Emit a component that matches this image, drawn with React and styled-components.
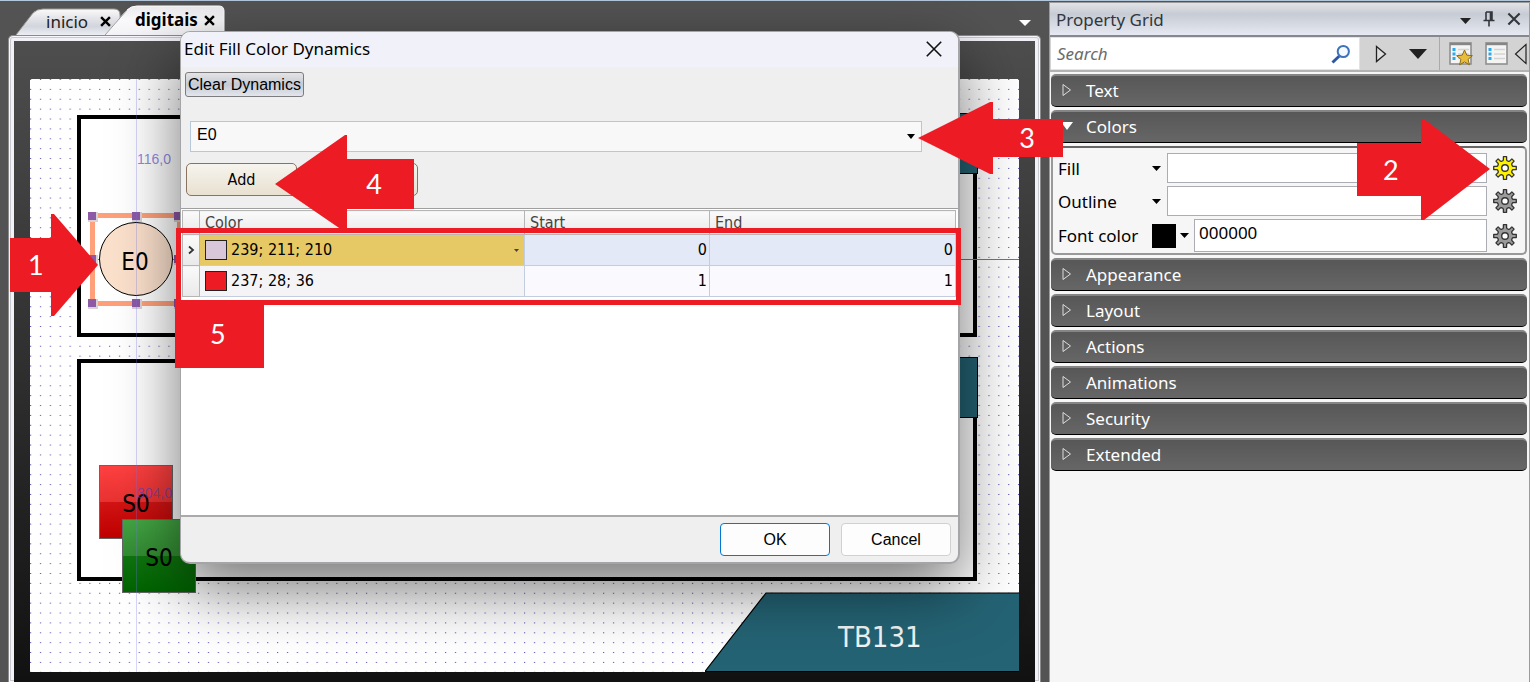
import React from "react";
import styled, { createGlobalStyle, css } from "styled-components";

const UI = `"Noto Sans", "Open Sans", sans-serif`;
const CLASSIC = `"DejaVu Sans Condensed", "DejaVu Sans", sans-serif`;
const ARIAL = `"Liberation Sans", Arial, sans-serif`;
const RED = "#ed1c24";

const GlobalStyle = createGlobalStyle`
  *, *::before, *::after { box-sizing: border-box; }
  html, body { margin: 0; padding: 0; }
  body { background: #535353; font-family: ${UI}; font-size: 17px; color: #000; overflow: hidden; }
  button, input, select { font: inherit; color: inherit; margin: 0; padding: 0; }
  button { background: none; border: 0; }
  svg { display: block; flex: none; }
`;

/* ---------- Shell ---------- */

const Workspace = styled.div`
  position: relative;
  display: flex;
  min-height: 100vh;
  border-top: 1px solid #b4c6da;
  background: #535353;
`;

const Editor = styled.main`
  flex: 1;
  min-width: 0;
  display: flex;
  flex-direction: column;
  padding: 0 8px;
`;

/* ---------- Document tabs ---------- */

const TabStrip = styled.div`
  display: flex;
  align-items: flex-end;
  height: 34px;
  padding: 0 10px 0 8px;
`;

const Tab = styled.div`
  position: relative;
  isolation: isolate;
  display: flex;
  align-items: center;
  gap: ${(p) => (p.$active ? 6 : 12)}px;
  width: ${(p) => (p.$active ? 120 : 105)}px;
  height: ${(p) => (p.$active ? 30 : 27)}px;
  padding-left: 30px;
  margin-left: ${(p) => (p.$active ? -16 : 0)}px;
  font-weight: ${(p) => (p.$active ? 700 : 400)};
`;

const TabShape = styled.svg`
  position: absolute;
  inset: 0;
  z-index: -1;
`;

const TabName = styled.button`
  line-height: 24px;
  color: ${(p) => (p.$active ? "#000" : "#222")};
`;

const Spacer = styled.div`
  flex: 1;
`;

const StripMenu = styled.button`
  align-self: center;
  padding-top: 10px;
`;

/* ---------- Drawing canvas ---------- */

const Frame = styled.div`
  flex: 1;
  display: flex;
  border: 1px solid #8b8b8b;
  border-bottom: 0;
  border-radius: 5px 5px 0 0;
  padding: 5px 5px 0;
  background: #f1f1f7;
  box-shadow: inset 0 0 0 1px #f8f8fc, inset 0 0 0 2px #c9c9d0;
`;

const Backdrop = styled.div`
  flex: 1;
  display: flex;
  padding: 38px 16px 10px;
  background: linear-gradient(#4e4e4e, #111);
`;

const Canvas = styled.div`
  position: relative;
  flex: 1;
  overflow: hidden;
  background: #fff;
  font-family: ${CLASSIC};
`;

const GridLayer = styled.svg`
  position: absolute;
  inset: 0;
  width: 100%;
  height: 100%;
`;

const Group = styled.div`
  position: absolute;
  left: 47px;
  right: 42px;
  top: ${(p) => p.$top}px;
  height: 222px;
  border: 4px solid #000;
  background: #fff;
`;

const GroupTag = styled.div`
  position: absolute;
  right: -5px;
  top: -6px;
  width: 220px;
  height: 61px;
  border: 1px solid #000;
  background: #246374;
`;

const Shape = styled.div`
  position: absolute;
  left: ${(p) => p.$x}px;
  top: ${(p) => p.$y}px;
  width: 74px;
  height: 74px;
  display: flex;
  align-items: center;
  justify-content: center;
  font-size: 24px;
`;

const Lamp = styled(Shape)`
  padding: 6px 2px 0 0;
  border: 1px solid #000;
  border-radius: 50%;
  background: #fbe0cc;
`;

const Coil = styled(Shape)`
  padding-top: 4px;
  border: 1px solid #666;
  background: ${(p) =>
    p.$green
      ? "linear-gradient(#43a643, #338c33 50%, #0f750f 50%, #006400)"
      : "linear-gradient(#ff4040, #e83232 50%, #d21414 50%, #c00000)"};
`;

const Selection = styled.div`
  position: absolute;
  left: 60px;
  top: 134px;
  width: 92px;
  height: 93px;
  border: 5px solid #ffa07a;
`;

const Handle = styled.i`
  position: absolute;
  left: ${(p) => p.$x}px;
  top: ${(p) => p.$y}px;
  width: 10px;
  height: 10px;
  border: 2px solid #d9d2d6;
  border-top: 0;
  border-left: 0;
  background: #8d5aa6;
`;

const GuideX = styled.div`
  position: absolute;
  left: 106px;
  top: 0;
  bottom: 0;
  width: 1px;
  background: rgba(120, 120, 240, 0.3);
`;

const GuideY = styled.div`
  position: absolute;
  top: 180px;
  left: 47px;
  right: 0;
  height: 1px;
  background: #6a68dc;
`;

const Distance = styled.span`
  position: absolute;
  left: 107px;
  top: ${(p) => p.$y}px;
  font: 14px/16px ${ARIAL};
  color: rgba(80, 70, 210, 0.65);
`;

const Plate = styled.div`
  position: absolute;
  right: 0;
  bottom: 0;
  width: 314px;
  height: 80px;
  display: flex;
  align-items: center;
  padding: 10px 0 0 133px;
  font-size: 29px;
  color: #f2f5f6;
`;

const PlateShape = styled.svg`
  position: absolute;
  inset: 0;
`;

const PlateText = styled.span`
  position: relative;
`;

/* ---------- Property panel ---------- */

const Panel = styled.aside`
  flex: none;
  width: 481px;
  display: flex;
  flex-direction: column;
  margin-top: 1px;
  border: 1px solid #9b9b9b;
  border-bottom: 0;
  background: #f6f6f6;
`;

const PanelHeader = styled.header`
  display: flex;
  align-items: center;
  gap: 12px;
  height: 34px;
  padding: 0 8px 0 6px;
  border-bottom: 2px solid #85888e;
  background: linear-gradient(#e2e3e6, #c6cbd4 35%, #e6e9f2);
  color: #33363c;
`;

const PanelTitle = styled.h2`
  flex: 1;
  margin: 0;
  font-size: 17px;
  font-weight: 400;
`;

const PanelMenu = styled.button`
  padding-top: 4px;
`;

const Toolbar = styled.div`
  display: flex;
  align-items: stretch;
  height: 33px;
  background: #d3d3d3;
`;

const SearchBox = styled.label`
  display: flex;
  align-items: center;
  flex: 1;
  min-width: 0;
  padding: 0 8px 0 6px;
  margin-left: 1px;
  background: #fff;
  border: 1px solid #dfe3ec;
  border-left: 0;
`;

const SearchInput = styled.input`
  flex: 1;
  min-width: 0;
  border: 0;
  outline: 0;
  background: none;
  font-style: italic;
  &::placeholder { color: #6b6b6b; opacity: 1; }
`;

const ToolGroup = styled.div`
  display: flex;
  align-items: center;
  justify-content: ${(p) => (p.$divided ? "flex-start" : "space-between")};
  gap: ${(p) => (p.$divided ? 12 : 0)}px;
  width: ${(p) => p.$width}px;
  padding: ${(p) => p.$padding};
  border-left: ${(p) => (p.$divided ? "1px solid #aaa" : "0")};
`;

const PreviousButton = styled.button`
  margin-left: -7px;
`;

const Sections = styled.div`
  display: flex;
  flex-direction: column;
  gap: 3px;
  padding: 2px 2px 3px 1px;
  border-top: 2px solid #b3b3b3;
`;

const SectionButton = styled.button`
  display: flex;
  align-items: center;
  gap: 13px;
  height: 33px;
  padding: 0 10px 2px;
  border-top: 2px solid #858585;
  border-bottom: 1px solid #000;
  border-radius: 5px;
  background: linear-gradient(#575757, #666);
  color: #fff;
  text-align: left;
`;

const SectionBody = styled.div`
  display: flex;
  flex-direction: column;
  gap: 3px;
  height: 109px;
  padding: 5px 8px 0 5px;
  border: 2px solid #999;
  border-top-color: #666;
  border-radius: 5px;
`;

const Row = styled.div`
  display: flex;
  align-items: center;
  height: ${(p) => (p.$tall ? 33 : 30)}px;
`;

const RowLabel = styled.label`
  width: 94px;
  white-space: nowrap;
`;

const ColorButton = styled.button`
  display: flex;
  align-items: center;
  gap: 4px;
  width: ${(p) => (p.$wide ? 42 : 15)}px;
`;

const Swatch = styled.span`
  flex: none;
  width: ${(p) => p.$size}px;
  height: ${(p) => p.$size}px;
  border: 1px solid #000;
  background: ${(p) => p.$color};
`;

const ValueInput = styled.input`
  flex: 1;
  min-width: 0;
  align-self: stretch;
  padding: 0 4px 7px;
  border: 1px solid #abadb3;
  background: #fff;
  outline: 0;
`;

const GearButton = styled.button`
  margin-left: 6px;
`;

/* ---------- Dialog ---------- */

const Dialog = styled.section`
  position: absolute;
  left: 180px;
  top: 30px;
  width: 780px;
  border: 1px solid #a5a5a8;
  border-right-width: 2px;
  border-bottom-width: 2px;
  border-radius: 10px;
  overflow: hidden;
  background: #efefef;
  box-shadow: 0 24px 64px rgba(0, 0, 0, 0.55);
`;

const DialogTitle = styled.header`
  display: flex;
  align-items: center;
  justify-content: space-between;
  height: 35px;
  padding: 0 15px 2px 3px;
  background: #f1f2f9;
  font-size: 17px;
`;

const DialogBody = styled.div`
  display: flex;
  flex-direction: column;
  align-items: flex-start;
  padding: 5px 0 0 4px;
`;

const ClearButton = styled.button`
  height: 25px;
  padding: 0 2px;
  border: 1px solid #7c7c80;
  border-radius: 3px;
  background: linear-gradient(#e4e4e6, #cfd2d9 35%, #c6cad3 50%, #e2e5ec);
  font: 16px/20px ${ARIAL};
`;

const TagPicker = styled.div`
  position: relative;
  align-self: stretch;
  margin: 24px 36px 0 5px;
`;

const TagSelect = styled.select`
  appearance: none;
  width: 100%;
  height: 31px;
  padding: 0 6px 4px;
  border: 1px solid #b5c7d9;
  border-radius: 0;
  background: #f8f8f8;
  font: 16px/20px ${ARIAL};
  outline: 0;
`;

const PickerCaret = styled.svg`
  position: absolute;
  right: ${(p) => p.$right}px;
  top: ${(p) => p.$top}px;
  pointer-events: none;
`;

const Actions = styled.div`
  display: flex;
  gap: 10px;
  margin: 11px 0 12px 1px;
`;

const ActionButton = styled.button`
  width: 111px;
  height: 33px;
  border: 1px solid #8a7360;
  border-radius: 5px;
  background: linear-gradient(#f6f4ee, #e8e1d0);
  font: 16px/20px ${CLASSIC};
`;

const GridPanel = styled.div`
  height: 309px;
  border-top: 1px solid #9f9f9f;
  border-bottom: 2px solid #aaa;
  padding: 1px 2px 0 1px;
  background: #fff;
`;

const Grid = styled.table`
  width: 100%;
  table-layout: fixed;
  border-collapse: collapse;
  font: 16px/20px ${CLASSIC};
`;

const HeadCell = styled.th`
  width: ${(p) => (p.$width ? `${p.$width}px` : "auto")};
  height: 24px;
  padding: 0 5px;
  border: 1px solid #b5b5b5;
  background: linear-gradient(#fafafa, #e9e9e9);
  color: #444;
  font-weight: 400;
  text-align: left;
`;

const Cell = styled.td`
  height: 31px;
  padding: 0 2px 0 5px;
  border: 1px solid #c3cde0;
  background: ${(p) => (p.$current ? "#e3e9f7" : "#fafafe")};
  text-align: right;
  ${(p) =>
    p.$marker &&
    css`
      padding: 0 4px;
      border-color: #b5b5b5;
      background: linear-gradient(#fafafa, #e9e9e9);
    `}
  ${(p) =>
    p.$color &&
    css`
      background: ${p.$current ? "#e6c964" : "#f4f4f7"};
      text-align: left;
    `}
`;

const ColorValue = styled.div`
  position: relative;
  display: flex;
  align-items: center;
  gap: 4px;
`;

const SwatchBox = styled.span`
  flex: none;
  width: 22px;
  height: 20px;
  border: 1px solid #222;
  background: ${(p) => p.$color};
`;

const ColorSelect = styled.select`
  appearance: none;
  flex: 1;
  border: 0;
  background: none;
  outline: 0;
`;

const DialogFooter = styled.footer`
  display: flex;
  justify-content: flex-end;
  gap: 11px;
  padding: 6px 7px;
`;

const FooterButton = styled.button`
  width: 110px;
  height: 33px;
  border: 1px solid ${(p) => (p.$primary ? "#0078d4" : "#d0d0d0")};
  border-radius: 4px;
  background: #fdfdfd;
  font: 16px/20px ${ARIAL};
`;

/* ---------- Step markers ---------- */

const Marker = styled.div`
  position: absolute;
  top: ${(p) => p.$top}px;
  ${(p) => (p.$right !== undefined ? `right: ${p.$right}px;` : `left: ${p.$left}px;`)}
  width: ${(p) => p.$w}px;
  height: ${(p) => p.$h}px;
  display: flex;
  align-items: center;
  justify-content: ${(p) => (p.$dir === "left" ? "flex-end" : "flex-start")};
  padding: 0 ${(p) => p.$inset}px;
  background: ${(p) => (p.$dir ? "none" : RED)};
  color: #fff;
  font: 27px/32px Lato, sans-serif;
  pointer-events: none;
`;

const MarkerShape = styled.svg`
  position: absolute;
  inset: 0;
`;

const MarkerText = styled.span`
  position: relative;
`;

const Highlight = styled.div`
  position: absolute;
  left: 176px;
  top: 227px;
  width: 785px;
  height: 77px;
  border: 5px solid ${RED};
  pointer-events: none;
`;

/* ---------- Icons ---------- */

const Caret = ({ w = 9, h = 5, color = "#000" }) => (
  <svg width={w} height={h} viewBox={`0 0 ${w} ${h}`} aria-hidden="true">
    <path d={`M0 0H${w}L${w / 2} ${h}Z`} fill={color} />
  </svg>
);

const Cross = ({ size, color, weight }) => (
  <svg width={size} height={size} viewBox="0 0 10 10" aria-hidden="true">
    <path d="M1 1L9 9M9 1L1 9" stroke={color} strokeWidth={weight} fill="none" />
  </svg>
);

const gearPath = (() => {
  const points = [];
  for (let i = 0; i < 8; i += 1) {
    const a = (i * Math.PI) / 4;
    [
      [7.6, -0.3],
      [8.2, -0.2],
      [11.4, -0.14],
      [11.4, 0.14],
      [8.2, 0.2],
      [7.6, 0.3],
    ].forEach(([r, d]) => {
      points.push(`${(12 + r * Math.sin(a + d)).toFixed(2)} ${(12 - r * Math.cos(a + d)).toFixed(2)}`);
    });
  }
  return `M${points.join("L")}Z`;
})();

const Gear = ({ color }) => (
  <svg width="24" height="24" viewBox="0 0 24 24" aria-hidden="true">
    <path d={gearPath} fill={color} stroke="#333" strokeWidth="1.3" strokeLinejoin="round" />
    <circle cx="12" cy="12" r="3.3" fill="#fff" stroke="#333" strokeWidth="1.4" />
  </svg>
);

const ListIcon = ({ star }) => (
  <svg width="24" height="24" viewBox="0 0 24 24" aria-hidden="true">
    <rect x="1" y="1" width="21" height="21" fill="#f4f4f2" stroke="#8f8f8f" strokeWidth="1.6" />
    <path d="M1 2H22" stroke="#858585" strokeWidth="2.4" />
    <path d="M3.5 7.5h3M3.5 12h3M3.5 16.5h3" stroke="#2aa9ec" strokeWidth="3" />
    <path d="M9 7.5h11M9 12h11M9 16.5h11" stroke="#d4d4d4" strokeWidth="1.6" />
    {star && (
      <path
        d="M15.5 8L17.8 13.2L23.4 13.7L19.1 17.3L20.4 22.8L15.5 19.9L10.6 22.8L11.9 17.3L7.6 13.7L13.2 13.2Z"
        fill="#e9bd3a"
        stroke="#8a6a22"
        strokeWidth="1"
      />
    )}
  </svg>
);

const Magnifier = () => (
  <svg width="20" height="20" viewBox="0 0 20 20" aria-hidden="true">
    <path d="M8.3 12L1.5 18.5" stroke="#2d57a5" strokeWidth="3" />
    <circle cx="12.3" cy="7.5" r="5.6" fill="#f4faff" stroke="#3e72bd" strokeWidth="2" />
  </svg>
);

const Pin = () => (
  <svg width="12" height="16" viewBox="0 0 12 16" aria-hidden="true">
    <path d="M3 1H9V9M3 1V9M7.5 1V9M0.5 9.5H11.5M6 10V15.5" stroke="#33363c" strokeWidth="1.6" fill="none" />
  </svg>
);

const Expander = ({ open }) =>
  open ? (
    <Caret w={12} h={8} color="#fff" />
  ) : (
    <svg width="12" height="14" viewBox="0 0 12 14" aria-hidden="true">
      <path d="M2 1.5L9.5 7L2 12.5Z" fill="none" stroke="#ddd" />
    </svg>
  );

/* ---------- Parts ---------- */

const Section = ({ title, open }) => (
  <SectionButton type="button" aria-expanded={!!open}>
    <Expander open={open} />
    {title}
  </SectionButton>
);

const DocumentTab = ({ name, active, shape, stops }) => (
  <Tab $active={active}>
    <TabShape width={active ? 120 : 105} height={active ? 30 : 27} aria-hidden="true">
      <defs>
        <linearGradient id={`tab-${name}`} x1="0" y1="0" x2="0" y2="1">
          {stops.map((c, i) => (
            <stop key={i} offset={i / (stops.length - 1)} stopColor={c} />
          ))}
        </linearGradient>
      </defs>
      <path d={shape} fill={`url(#tab-${name})`} stroke={active ? "#fff" : "#9a9a9a"} />
      {active && <path d="M0 30L22 5" stroke="#999" fill="none" />}
    </TabShape>
    <TabName type="button" $active={active}>
      {name}
    </TabName>
    <button type="button" aria-label={`Close ${name}`}>
      <Cross size={11} color="#000" weight={2.2} />
    </button>
  </Tab>
);

const ColorRow = ({ id, label, swatch, value = "", gear }) => (
  <Row $tall={!!swatch}>
    <RowLabel htmlFor={id}>{label}</RowLabel>
    <ColorButton type="button" $wide={!!swatch} aria-label={`${label} palette`}>
      {swatch && <Swatch $size={24} $color={swatch} />}
      <Caret />
    </ColorButton>
    <ValueInput id={id} type="text" defaultValue={value} />
    <GearButton type="button" aria-label={`${label} dynamics`}>
      <Gear color={gear} />
    </GearButton>
  </Row>
);

const Arrow = ({ points, children, ...box }) => (
  <Marker {...box}>
    <MarkerShape width={box.$w} height={box.$h} aria-hidden="true">
      <polygon points={points} fill={RED} />
    </MarkerShape>
    <MarkerText>{children}</MarkerText>
  </Marker>
);

const handles = [
  [58, 133], [102, 133], [144, 133],
  [58, 176], [144, 176],
  [58, 220], [102, 220], [144, 220],
];

const Drawing = () => (
  <Canvas>
    <GridLayer aria-hidden="true">
      <defs>
        <pattern id="dots" width="9.88" height="9.88" patternUnits="userSpaceOnUse">
          <rect width="1.2" height="1" fill="#5a55b5" />
        </pattern>
      </defs>
      <rect width="100%" height="100%" fill="url(#dots)" />
    </GridLayer>
    <Group $top={36}>
      <GroupTag />
    </Group>
    <Group $top={280}>
      <GroupTag />
    </Group>
    <GuideY />
    <Selection />
    {handles.map(([x, y]) => (
      <Handle key={`${x}-${y}`} $x={x} $y={y} />
    ))}
    <Lamp $x={69} $y={143}>E0</Lamp>
    <Coil $x={69} $y={386}>S0</Coil>
    <Coil $x={92} $y={440} $green>S0</Coil>
    <GuideX />
    <Distance $y={72}>116,0</Distance>
    <Distance $y={406}>304,0</Distance>
    <Plate>
      <PlateShape width="314" height="80" aria-hidden="true">
        <polygon points="0,79.5 61,1 315,1 315,79.5" fill="#246374" stroke="#000" strokeWidth="1.2" />
      </PlateShape>
      <PlateText>TB131</PlateText>
    </Plate>
  </Canvas>
);

const FillDynamicsDialog = () => (
  <Dialog role="dialog" aria-labelledby="dialog-title">
    <DialogTitle>
      <span id="dialog-title">Edit Fill Color Dynamics</span>
      <button type="button" aria-label="Close">
        <Cross size={18} color="#111" weight={0.9} />
      </button>
    </DialogTitle>
    <DialogBody>
      <ClearButton type="button">Clear Dynamics</ClearButton>
      <TagPicker>
        <TagSelect aria-label="Tag" defaultValue="E0">
          <option>E0</option>
        </TagSelect>
        <PickerCaret $right={7} $top={13} width="8" height="5" aria-hidden="true">
          <path d="M0 0H8L4 5Z" />
        </PickerCaret>
      </TagPicker>
      <Actions>
        <ActionButton type="button">Add</ActionButton>
        <ActionButton type="button" aria-label="Remove" />
      </Actions>
    </DialogBody>
    <GridPanel>
      <Grid>
        <thead>
          <tr>
            <HeadCell $width={17} aria-label="Current row" />
            <HeadCell $width={325}>Color</HeadCell>
            <HeadCell $width={185}>Start</HeadCell>
            <HeadCell>End</HeadCell>
          </tr>
        </thead>
        <tbody>
          <tr>
            <Cell $marker>
              <svg width="8" height="10" viewBox="0 0 8 10" aria-hidden="true">
                <path d="M2 1.5L6 5L2 8.5" fill="none" stroke="#333" strokeWidth="1.8" />
              </svg>
            </Cell>
            <Cell $color $current>
              <ColorValue>
                <SwatchBox $color="#d8c7d9" />
                <ColorSelect aria-label="Row color" defaultValue="239; 211; 210">
                  <option>239; 211; 210</option>
                </ColorSelect>
                <PickerCaret $right={3} $top={9} width="5" height="3" aria-hidden="true">
                  <path d="M0 0H5L2.5 3Z" fill="#444" />
                </PickerCaret>
              </ColorValue>
            </Cell>
            <Cell $current>0</Cell>
            <Cell $current>0</Cell>
          </tr>
          <tr>
            <Cell $marker />
            <Cell $color>
              <ColorValue>
                <SwatchBox $color={RED} />
                237; 28; 36
              </ColorValue>
            </Cell>
            <Cell>1</Cell>
            <Cell>1</Cell>
          </tr>
        </tbody>
      </Grid>
    </GridPanel>
    <DialogFooter>
      <FooterButton type="button" $primary>OK</FooterButton>
      <FooterButton type="button">Cancel</FooterButton>
    </DialogFooter>
  </Dialog>
);

const PropertyGrid = () => (
  <Panel>
    <PanelHeader>
      <PanelTitle>Property Grid</PanelTitle>
      <PanelMenu type="button" aria-label="Panel menu">
        <Caret w={11} h={6} color="#222" />
      </PanelMenu>
      <button type="button" aria-label="Pin panel">
        <Pin />
      </button>
      <button type="button" aria-label="Close panel">
        <Cross size={14} color="#33363c" weight={1.5} />
      </button>
    </PanelHeader>
    <Toolbar>
      <SearchBox>
        <SearchInput type="text" placeholder="Search" aria-label="Search" />
        <Magnifier />
      </SearchBox>
      <ToolGroup $width={79} $padding="0 12px 0 15px">
        <button type="button" aria-label="Collapse all">
          <svg width="12" height="18" viewBox="0 0 12 18" aria-hidden="true">
            <path d="M1.5 1.5L10.5 9L1.5 16.5Z" fill="#ddd" stroke="#222" strokeWidth="1.3" />
          </svg>
        </button>
        <button type="button" aria-label="Expand all">
          <Caret w={18} h={10} color="#222" />
        </button>
      </ToolGroup>
      <ToolGroup $divided $width={90} $padding="0 0 0 9px">
        <button type="button" aria-label="Favorites">
          <ListIcon star />
        </button>
        <button type="button" aria-label="All properties">
          <ListIcon />
        </button>
        <PreviousButton type="button" aria-label="Previous">
          <svg width="13" height="22" viewBox="0 0 13 22" aria-hidden="true">
            <path d="M12 1.5L1.5 11L12 20.5Z" fill="none" stroke="#222" strokeWidth="1.2" />
          </svg>
        </PreviousButton>
      </ToolGroup>
    </Toolbar>
    <Sections>
      <Section title="Text" />
      <Section title="Colors" open />
      <SectionBody>
        <ColorRow id="fill" label="Fill" gear="#fff200" />
        <ColorRow id="outline" label="Outline" gear="#9b9b9b" />
        <ColorRow id="font-color" label="Font color" swatch="#000" value="000000" gear="#9b9b9b" />
      </SectionBody>
      <Section title="Appearance" />
      <Section title="Layout" />
      <Section title="Actions" />
      <Section title="Animations" />
      <Section title="Security" />
      <Section title="Extended" />
    </Sections>
  </Panel>
);

export default function App() {
  return (
    <>
      <GlobalStyle />
      <Workspace>
        <Editor>
          <TabStrip>
            <DocumentTab
              name="inicio"
              shape="M0 27L17 5Q21 1 27 1H98Q104 1 104 7V27"
              stops={["#fafafa", "#e6e6ea", "#d2d5dd", "#eceef4"]}
            />
            <DocumentTab
              name="digitais"
              active
              shape="M0 30L22 5Q26 1 32 1H114Q119 1 119 6V30"
              stops={["#ececee", "#fafafc", "#f3f3f7"]}
            />
            <Spacer />
            <StripMenu type="button" aria-label="Open documents">
              <Caret w={12} h={6} color="#fff" />
            </StripMenu>
          </TabStrip>
          <Frame>
            <Backdrop>
              <Drawing />
            </Backdrop>
          </Frame>
        </Editor>
        <PropertyGrid />
        <FillDynamicsDialog />
        <Arrow $dir="right" $left={10} $top={213} $w={88} $h={102} $inset={18}
          points="0,24 41,24 41,0 44,0 88,51 44,102 41,102 41,78 0,78">1</Arrow>
        <Arrow $dir="right" $right={40} $top={118} $w={133} $h={101} $inset={26}
          points="0,24 64,24 64,0 67,0 133,50 67,101 64,101 64,77 0,77">2</Arrow>
        <Arrow $dir="left" $left={918} $top={101} $w={145} $h={72} $inset={28}
          points="0,36 72,0 75,0 75,17 145,17 145,55 75,55 75,72 72,72">3</Arrow>
        <Arrow $dir="left" $left={275} $top={134} $w={139} $h={97} $inset={32}
          points="0,49 70,0 72,0 72,24 139,24 139,74 72,74 72,97 70,97">4</Arrow>
        <Highlight />
        <Marker $left={175} $top={299} $w={89} $h={68} $inset={35}>
          <MarkerText>5</MarkerText>
        </Marker>
      </Workspace>
    </>
  );
}
